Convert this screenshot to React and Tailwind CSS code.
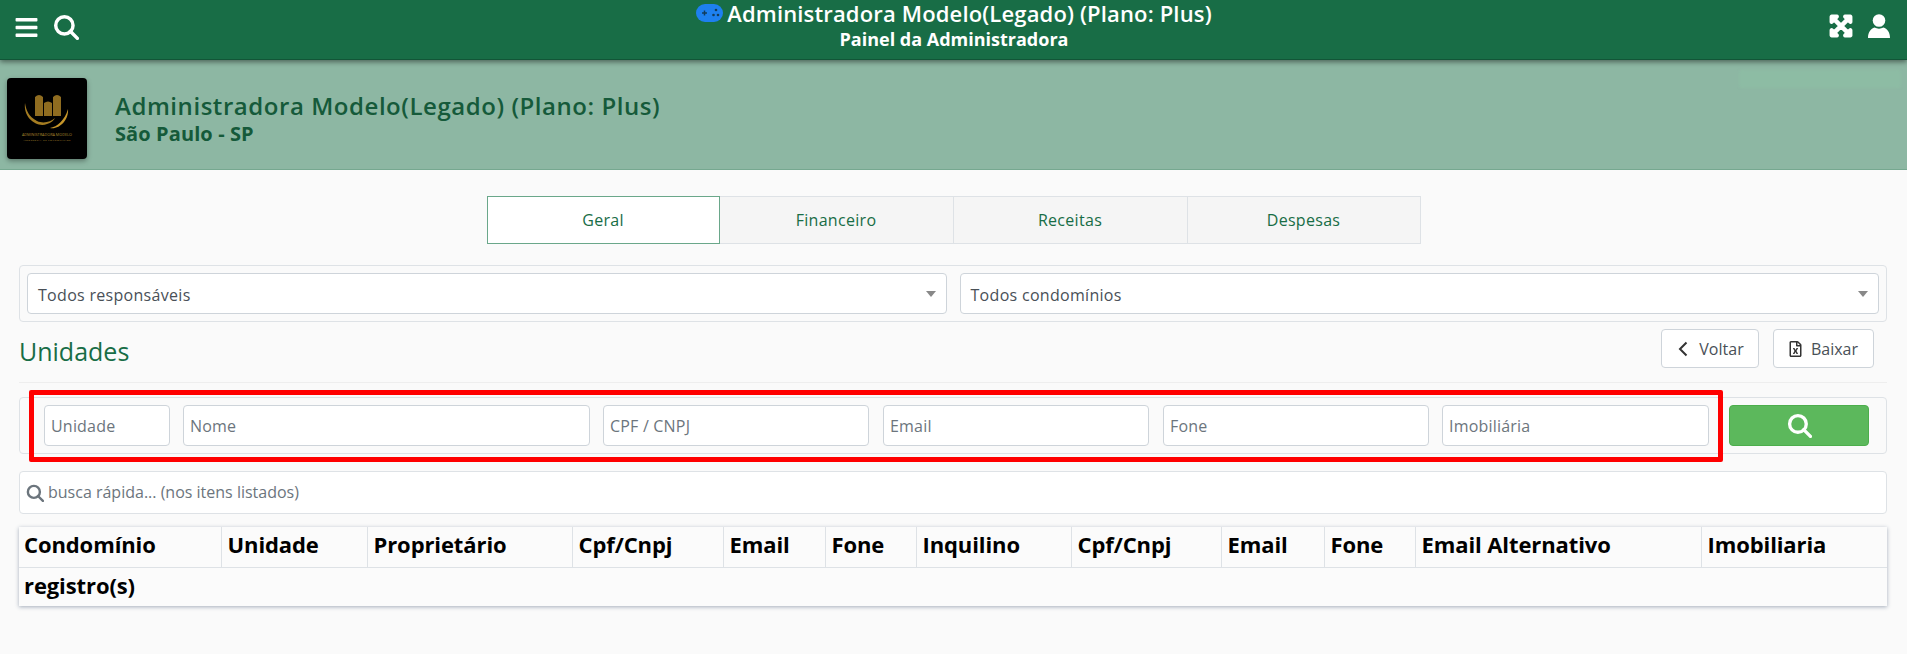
import React from "react";
import { FaBars, FaExpandArrowsAlt, FaRegFileExcel } from "react-icons/fa";

function SearchIcon({ className }) {
    return (
        <svg viewBox="0 0 24 24" className={className} fill="none" stroke="currentColor" strokeWidth="3.2">
            <circle cx="10.5" cy="10.5" r="8" />
            <path d="M16 16l6.500 6.500" strokeLinecap="round" />
        </svg>
    );
}

function UserIcon() {
    return (
        <svg viewBox="0 0 22 24" className="w-[22px] h-[24px]" fill="currentColor">
            <circle cx="11" cy="6.500" r="6.300" />
            <path d="M0 24c0-6 3-9.500 6.500-10.500 2.800 1.500 6.200 1.500 9 0C19 14.500 22 18 22 24z" />
        </svg>
    );
}

function Gamepad() {
    return (
        <svg viewBox="0 0 27 18" className="w-[27px] h-[18px] shrink-0">
            <rect x="0" y="0" width="27" height="18" rx="9" fill="#1e80f0" />
            <path d="M6 9h5M8.500 6.500v5" stroke="#123c5c" strokeWidth="1.500" />
            <circle cx="20" cy="6" r="1.300" fill="#123c5c" />
            <circle cx="17.500" cy="11" r="1.300" fill="#123c5c" />
            <circle cx="22" cy="11" r="1.300" fill="#123c5c" />
        </svg>
    );
}

function Logo() {
    return (
        <div className="w-[80px] h-[81px] bg-black rounded-[4px] shadow-[0_2px_5px_rgba(0,0,0,0.35)] shrink-0">
            <svg viewBox="0 0 80 81" className="w-full h-full">
                <path d="M28 38V19q4-4 8 0v19zM37 38V25q4-3 8 0v13zM46 38V19q4-4 8 0v19z" fill="#8f6c20" />
                <path d="M18 25C16 40 30 50 40 46c4-1 7-4 8-6-4 4-12 6-18 3-8-4-11-11-12-18z" fill="#a57d22" />
                <path d="M61 31c1 11-9 21-18 19 7-1 15-8 18-19z" fill="#c6962a" />
                <text x="40" y="58" textAnchor="middle" fontSize="3.800" fill="#a8842c" fontFamily="Open Sans">ADMINISTRADORA MODELO</text>
                <text x="40" y="63" textAnchor="middle" fontSize="2.400" letterSpacing="0.5" fill="#a8842c" fontFamily="Open Sans">ASSESSORIA DE CONDOMINIOS</text>
            </svg>
        </div>
    );
}

function Select({ label }) {
    return (
        <div className="flex-1 h-[41px] bg-white border border-[#ced4da] rounded-[4px] flex items-center justify-between pl-[10px] pr-[10px]">
            <span className="text-[16px] tracking-[0.3px] pt-[3px] text-[#495057]">{label}</span>
            <span className="w-0 h-0 border-x-[5px] border-x-transparent border-t-[6px] border-t-[#888888]"></span>
        </div>
    );
}

function Field({ label, className }) {
    return (
        <input
            placeholder={label}
            className={`${className} h-[41px] bg-white border border-[#ced4da] rounded-[4px] px-[6px] text-[16px] tracking-[0.2px] placeholder:text-[#6c757d] outline-none`}
        />
    );
}

const columns = [
    ["Condomínio", "w-[202px]"],
    ["Unidade", "w-[146px]"],
    ["Proprietário", "w-[205px]"],
    ["Cpf/Cnpj", "w-[151px]"],
    ["Email", "w-[102px]"],
    ["Fone", "w-[91px]"],
    ["Inquilino", "w-[155px]"],
    ["Cpf/Cnpj", "w-[150px]"],
    ["Email", "w-[103px]"],
    ["Fone", "w-[91px]"],
    ["Email Alternativo", "w-[286px]"],
    ["Imobiliaria", "w-[186px]"],
];

export default function App() {
    return (
        <div className="h-[654px] overflow-hidden bg-[#fafafa] font-['Open_Sans',sans-serif]">
            <header className="relative z-10 h-[60px] bg-[#186d46] border-b border-[#125537] shadow-[0_2px_5px_rgba(0,0,0,0.45)] flex items-start justify-between text-white">
                <div className="flex items-center gap-[15px] pl-[15px] pt-[14px]">
                    <FaBars className="w-[23px] h-[25px]" />
                    <SearchIcon className="w-[26px] h-[26px]" />
                </div>
                <div className="flex flex-col items-center">
                    <div className="flex items-center gap-[4px] h-[26px]">
                        <Gamepad />
                        <span className="text-[22px] font-semibold leading-[26px] tracking-[0.15px]">Administradora Modelo(Legado) (Plano: Plus)</span>
                    </div>
                    <span className="text-[18px] font-bold leading-[26px]">Painel da Administradora</span>
                </div>
                <div className="flex items-center gap-[15px] pr-[17px] pt-[14px]">
                    <FaExpandArrowsAlt className="w-[24px] h-[24px]" stroke="currentColor" strokeWidth="40" />
                    <UserIcon />
                </div>
            </header>

            <section className="relative h-[110px] bg-[#8db7a3] border-b border-[#76a890] flex items-center pl-[7px] pt-[8px]">
                <Logo />
                <div className="ml-[28px] pt-[1px] text-[#155a3a]">
                    <h1 className="text-[24px] font-semibold leading-[26px] mb-[3px] tracking-[0.55px]">Administradora Modelo(Legado) (Plano: Plus)</h1>
                    <p className="text-[20px] font-bold leading-[24px] tracking-[0.1px]">São Paulo - SP</p>
                </div>
                <div className="absolute right-[6px] top-[10px] w-[162px] h-[18px] bg-[#8dbca4] rounded-[3px] blur-[1px]"></div>
            </section>

            <nav className="flex justify-center pt-[26px]">
                <div className="flex h-[48px] text-[16px] tracking-[0.3px] text-[#186d46]">
                    <div className="w-[233px] border border-[#6aa78a] bg-white flex items-center justify-center">Geral</div>
                    <div className="w-[234px] border border-[#dee2e6] border-l-0 bg-[#f5f5f5] flex items-center justify-center">Financeiro</div>
                    <div className="w-[234px] border border-[#dee2e6] border-l-0 bg-[#f5f5f5] flex items-center justify-center">Receitas</div>
                    <div className="w-[233px] border border-[#dee2e6] border-l-0 bg-[#f5f5f5] flex items-center justify-center">Despesas</div>
                </div>
            </nav>

            <main className="pl-[19px] pr-[20px] pt-[21px]">
                <div className="h-[57px] border border-[#dee2e6] rounded-[4px] flex items-center gap-[13px] pl-[7px] pr-[7px]">
                    <Select label="Todos responsáveis" />
                    <Select label="Todos condomínios" />
                </div>

                <div className="flex items-center justify-between h-[61px] border-b border-[#eeeeee] pb-[1px]">
                    <h2 className="text-[25px] text-[#186d46]">Unidades</h2>
                    <div className="flex gap-[14px] pr-[13px] -mt-[6px]">
                        <button className="w-[98px] h-[39px] bg-white border border-[#ced4da] rounded-[4px] flex items-center justify-center gap-[11px] pl-[2px] text-[16px] text-[#495057]">
                            <svg viewBox="0 0 10 16" className="w-[10px] h-[16px]" fill="none" stroke="#333333" strokeWidth="2">
                                <path d="M8.500 1.500L2 8l6.500 6.500" />
                            </svg>
                            Voltar
                        </button>
                        <button className="w-[101px] h-[39px] bg-white border border-[#ced4da] rounded-[4px] flex items-center justify-center gap-[9px] text-[16px] text-[#495057]">
                            <FaRegFileExcel className="w-[13px] h-[16px] text-[#333333]" />
                            Baixar
                        </button>
                    </div>
                </div>

                <div className="relative mt-[14px] h-[57px] border border-[#dee2e6] rounded-[4px] flex items-center pl-[24px]">
                    <Field label="Unidade" className="w-[126px]" />
                    <Field label="Nome" className="w-[407px] ml-[13px]" />
                    <Field label="CPF / CNPJ" className="w-[266px] ml-[13px]" />
                    <Field label="Email" className="w-[266px] ml-[14px]" />
                    <Field label="Fone" className="w-[266px] ml-[14px]" />
                    <Field label="Imobiliária" className="w-[267px] ml-[13px]" />
                    <button className="ml-[20px] w-[140px] h-[41px] bg-[#5cb85c] border border-[#4cae4c] rounded-[4px] flex items-center justify-center text-white">
                        <SearchIcon className="w-[25px] h-[25px]" />
                    </button>
                    <div className="absolute left-[9px] -top-[8px] w-[1694px] h-[72px] border-[5px] border-[#ff0000] rounded-[2px] pointer-events-none"></div>
                </div>

                <div className="mt-[17px] h-[43px] bg-white border border-[#dee2e6] rounded-[4px] flex items-center gap-[4px] pl-[6px]">
                    <SearchIcon className="w-[18px] h-[18px] text-[#6c757d]" />
                    <span className="text-[16px] text-[#6c757d] pb-[2px]">busca rápida... (nos itens listados)</span>
                </div>

                <table className="mt-[13px] w-[1868px] table-fixed bg-[#fbfbfb] text-black shadow-[0_1px_4px_rgba(60,80,110,0.45)] border-collapse">
                    <thead>
                        <tr className="h-[40px] border-b border-[#dee2e6]">
                            {columns.map(([name, width], i) => (
                                <th key={i} className={`${width} text-left text-[22px] tracking-[-0.1px] leading-[34px] pb-[6px] font-bold pl-[6px] first:pl-[5px] border-r border-[#dee2e6] last:border-r-0 whitespace-nowrap`}>
                                    {name}
                                </th>
                            ))}
                        </tr>
                    </thead>
                    <tbody>
                        <tr className="h-[38px]">
                            <td colSpan={12} className="text-[22px] tracking-[-0.1px] leading-[34px] pb-[4px] font-bold pl-[5px]">registro(s)</td>
                        </tr>
                    </tbody>
                </table>
            </main>
        </div>
    );
}
